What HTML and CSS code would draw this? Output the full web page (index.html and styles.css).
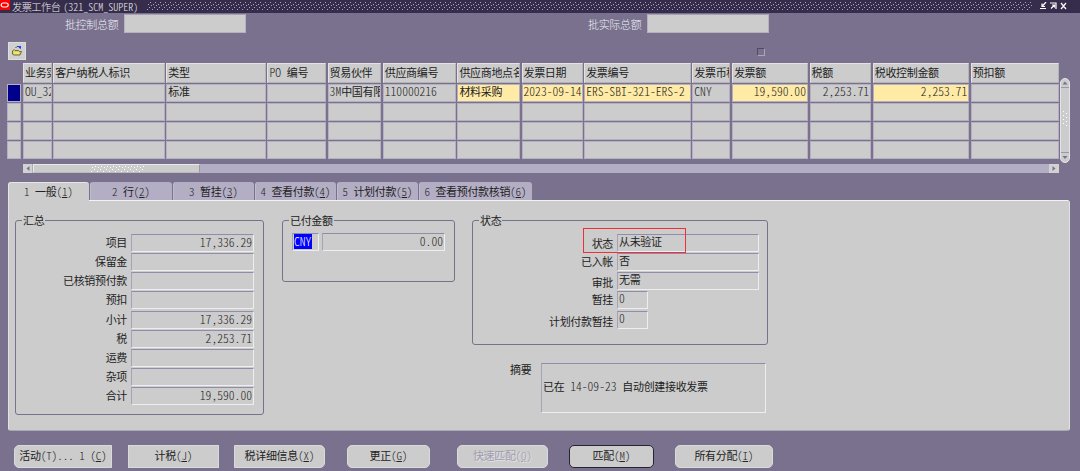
FILE: index.html
```
<!DOCTYPE html>
<html lang="zh-CN">
<head>
<meta charset="utf-8">
<title>发票工作台</title>
<link rel="stylesheet" href="styles.css">
</head>
<body>
<div class="window">
  <header class="titlebar">
    <svg class="oracle" width="10" height="10" viewBox="0 0 10 10"><path fill="#f00" d="M0 0H10V10H0z"/><rect x="1.2" y="3" width="7" height="4" rx="2" fill="none" stroke="#fff" stroke-width="1.2"/></svg>
    <span class="title">发票工作台 <i>(321_SCM_SUPER)</i></span>
    <svg class="grip" height="8"><defs><pattern id="dots" width="5" height="8" patternUnits="userSpaceOnUse"><path d="M3 0h1v1h-1zM1 2h1v1h-1zM4 3h1v1h-1zM2 5h1v1h-1zM0 7h1v1h-1z" fill="#aaa5b6"/></pattern></defs><rect width="100%" height="8" fill="url(#dots)"/></svg>
    <svg class="winbtns" width="28" height="8" viewBox="0 0 28 8" fill="none" stroke="#fff" stroke-width="1.2"><path d="M0 6.500H6M6 0L2.500 4M2 1.500V4.500H5M10 1H16V7M11 6.500L14.500 3M12 3H14.500V5.500M21 1L26 7M26 1L21 7"/></svg>
  </header>

  <section class="totals">
    <label>批控制总额</label><div class="totalbox first"></div>
    <label>批实际总额</label><div class="totalbox"></div>
  </section>

  <section class="tools">
    <div class="toolbtn"><svg width="12" height="12" viewBox="0 0 12 12"><path d="M1.500 6L3 4.500L4 5.500H7.500L8.500 6.500H10.500L9 10H2.500L1.500 9z" fill="#dcd458" stroke="#555325" stroke-width=".8"/><path d="M3 8H8" stroke="#fff8a0"/><path d="M4.500 3L6 1.500H8" fill="none" stroke="#444"/><path d="M7 1H10V4L8 3z" fill="#1845f8"/></svg></div>
    <div class="check"></div>
  </section>

  <section class="grid">
    <div class="cells">
      <b></b><b class="h">业务实体</b><b class="h">客户纳税人标识</b><b class="h">类型</b><b class="h"><i>PO </i>编号</b><b class="h">贸易伙伴</b><b class="h">供应商编号</b><b class="h">供应商地点名</b><b class="h">发票日期</b><b class="h">发票编号</b><b class="h">发票币种</b><b class="h">发票额</b><b class="h">税额</b><b class="h">税收控制金额</b><b class="h">预扣额</b>
      <div class="sel"></div><div><i>OU_321</i></div><div></div><div>标准</div><div></div><div><i>3M</i>中国有限</div><div><i>110000216</i></div><div class="y">材料采购</div><div class="y"><i>2023-09-14</i></div><div class="y"><i>ERS-SBI-321-ERS-2</i></div><div><i>CNY</i></div><div class="y r"><i>19,590.00</i></div><div class="r"><i>2,253.71</i></div><div class="y r"><i>2,253.71</i></div><div></div>
      <div></div><div></div><div></div><div></div><div></div><div></div><div></div><div></div><div></div><div></div><div></div><div></div><div></div><div></div><div></div>
      <div></div><div></div><div></div><div></div><div></div><div></div><div></div><div></div><div></div><div></div><div></div><div></div><div></div><div></div><div></div>
      <div></div><div></div><div></div><div></div><div></div><div></div><div></div><div></div><div></div><div></div><div></div><div></div><div></div><div></div><div></div>
    </div>
    <svg class="vscroll" width="10" height="85" viewBox="0 0 10 85"><rect x=".5" y=".5" width="9" height="84" rx="4.500" fill="#ccc" stroke="#e3e2e8"/><path d="M1 9.500H9M1 74.500H9" stroke="#9a96ac"/><path d="M2.500 6.500L5 3.500L7.500 6.500zM2.500 78L5 81L7.500 78z" fill="#77718c"/><path d="M3 33h1v1h-1zM6 35h1v1h-1zM3 37h1v1h-1zM6 39h1v1h-1zM3 41h1v1h-1zM6 43h1v1h-1zM3 45h1v1h-1zM6 47h1v1h-1z" fill="#fff"/></svg>
  </section>

  <div class="hscroll">
    <svg class="arrow" width="10" height="9" viewBox="0 0 10 9"><path d="M6.500 2L3.500 4.500L6.500 7z" fill="#77718c"/><path d="M9.500 0V9" stroke="#b0adba"/></svg>
    <div class="thumb"><svg width="54" height="6"><defs><pattern id="bumps" width="6" height="6" patternUnits="userSpaceOnUse"><path d="M4 0h1v1h-1zM1 1h1v1h-1zM3 3h1v1h-1zM0 5h1v1h-1z" fill="#fff"/></pattern></defs><rect width="54" height="6" fill="url(#bumps)"/></svg></div>
    <svg class="arrow end" width="10" height="9" viewBox="0 0 10 9"><path d="M3.500 2L6.500 4.500L3.500 7z" fill="#77718c"/></svg>
  </div>

  <nav class="tabs">
    <div class="active t1"><i>1 </i>一般<i>(<u>1</u>)</i></div><div class="t2"><i>2 </i>行<i>(<u>2</u>)</i></div><div class="t3"><i>3 </i>暂挂<i>(<u>3</u>)</i></div><div class="t4"><i>4 </i>查看付款<i>(<u>4</u>)</i></div><div class="t5"><i>5 </i>计划付款<i>(<u>5</u>)</i></div><div class="t6"><i>6 </i>查看预付款核销<i>(<u>6</u>)</i></div>
  </nav>

  <main class="panel">
    <section class="group summary">
      <h2>汇总</h2>
      <div class="row"><label>项目</label><div class="field r"><i>17,336.29</i></div></div>
      <div class="row"><label>保留金</label><div class="field"></div></div>
      <div class="row"><label>已核销预付款</label><div class="field"></div></div>
      <div class="row"><label>预扣</label><div class="field"></div></div>
      <div class="row"><label>小计</label><div class="field r"><i>17,336.29</i></div></div>
      <div class="row"><label>税</label><div class="field r"><i>2,253.71</i></div></div>
      <div class="row"><label>运费</label><div class="field"></div></div>
      <div class="row"><label>杂项</label><div class="field"></div></div>
      <div class="row"><label>合计</label><div class="field r"><i>19,590.00</i></div></div>
    </section>
    <section class="group paid">
      <h2>已付金额</h2>
      <div class="field currency"><i>CNY</i></div>
      <div class="field amount r"><i>0.00</i></div>
    </section>
    <div class="side">
      <section class="group status">
        <h2>状态</h2>
        <div class="row"><label>状态</label><div class="field">从未验证</div></div>
        <div class="row"><label>已入帐</label><div class="field">否</div></div>
        <div class="row low"><label>审批</label><div class="field">无需</div></div>
        <div class="row"><label>暂挂</label><div class="field small"><i>0</i></div></div>
        <div class="row low"><label>计划付款暂挂</label><div class="field small"><i>0</i></div></div>
        <div class="highlight"></div>
      </section>
      <section class="memo"><label>摘要</label><div class="field">已在<i> 14-09-23 </i>自动创建接收发票</div></section>
    </div>
  </main>

  <footer class="buttons">
    <button class="b1">活动<i>(T)... 1 (<u>C</u>)</i></button>
    <button class="b2">计税<i>(<u>J</u>)</i></button>
    <button class="b3">税详细信息<i>(<u>X</u>)</i></button>
    <button class="b4">更正<i>(<u>G</u>)</i></button>
    <button class="b5" disabled>快速匹配<i>(<u>Q</u>)</i></button>
    <button class="b6">匹配<i>(<u>M</u>)</i></button>
    <button class="b7">所有分配<i>(<u>I</u>)</i></button>
  </footer>
</div>
</body>
</html>
```
FILE: styles.css
```
* { box-sizing: border-box; }
body { margin: 0; }
svg { display: block; flex: none; }
i {
  font-style: normal;
  font-weight: 300;
  font-size: 11.6px;
  letter-spacing: 0;
  font-feature-settings: "hwid";
  white-space: pre;
  color: #222;
}
u { text-decoration: underline; text-underline-offset: 1px; text-decoration-thickness: 1px; }
.window {
  width: 1080px;
  height: 471px;
  overflow: hidden;
  display: flex;
  flex-direction: column;
  background: #79718e;
  color: #222;
  font: 400 11px/14px "Noto Sans CJK SC", sans-serif;
  letter-spacing: -0.33px;
  white-space: nowrap;
}

.titlebar { height: 13px; background: #352d4b; display: flex; color: #eee; }
.title { margin-left: 2px; font-size: 10.2px; font-weight: 300; letter-spacing: -0.5px; line-height: 13px; width: 135px; }
.title i { font-size: 10px; color: #eee; margin-left: 1px; }
.grip { width: 885px; margin-top: 2px; }
.winbtns { margin: 2px 0 0 8px; }

.totals { height: 29px; padding: 1px 0 0 65px; display: flex; color: #f0f0f4; }
.totals label { width: 59px; line-height: 20px; font-weight: 300; }
.totalbox { width: 122px; height: 19px; background: #ccc; border: 1px solid #b5b2c0; border-top-color: #a5a1b4; }
.totalbox.first { margin-right: 342px; }

.tools { height: 21px; display: flex; padding-left: 8px; }
.toolbtn { width: 18px; height: 18px; background: #d0d0d0; border: 1px solid #dededf; padding: 2px; }
.check { width: 8px; height: 8px; margin: 6px 0 0 731px; border: 1px solid #50466e; border-right-color: #aaa6b7; border-bottom-color: #aaa6b7; }

.grid { display: flex; height: 101px; padding-left: 7.4px; }
.cells {
  display: grid;
  grid-template-columns: 14px 28.500px 111.500px 99.500px 58.500px 53.500px 73px 62.500px 61px 106.500px 38px 76px 61.500px 96.500px 88px;
  grid-template-rows: 20px 18px 18px 18px 18px;
  column-gap: 1.65px;
  row-gap: 1px;
  width: 1052.6px;
}
.cells > * { overflow: hidden; padding: 0 1px; font-weight: 400; }
.cells > div { background: #ccc; border: 1px solid #b4b0c2; line-height: 12px; }
.cells > .h { background: #ccc; border: 1px solid #e3e3e3; border-right-color: #b4b3b6; border-bottom-color: #b4b3b6; line-height: 16px; }
.cells > .sel { background: #00008b; }
.cells > .y { background: #ffeba5; }
.cells > .r { text-align: right; }
.vscroll { margin-top: 15px; }

.hscroll { width: 1036px; height: 9px; margin-left: 23px; background: #b4aec4; display: flex; }
.arrow { background: #d2d2d2; }
.arrow.end { margin-left: auto; }
.thumb { width: 167px; background: #ccc; border: 1px solid #e8e8e8; border-right-color: #999; border-bottom-color: #bbb; padding: 1px 0 0 57px; }

.tabs { display: flex; height: 18px; margin: 9px 0 0 8px; gap: 1px; }
.tabs div { height: 18px; background: #b4aec4; border-radius: 3px 3px 0 0; line-height: 19px; border-left: 1px solid #c0bbcd; text-align: center; padding-right: 1px; }
.tabs i, .buttons i { font-size: 11px; }
.tabs .active { position: relative; z-index: 1; background: #ccc; height: 19px; line-height: 17px; border-color: #e6e6e6; border-top: 1px solid #e6e6e6; }
.t1 { width: 81px; } .t2 { width: 82px; } .t3 { width: 81px; } .t4 { width: 81px; } .t5 { width: 81px; } .t6 { width: 113px; }

.panel { width: 1062px; height: 231px; margin-left: 8px; flex: none; padding: 19px 0 0 7px; background: #ccc; border: 1px solid #e2e2e2; border-top-color: #f2f2f2; border-bottom-color: #aaa8b2; border-radius: 0 3px 3px 3px; display: flex; align-items: flex-start; }
.group { position: relative; border: 1px solid #77728b; border-radius: 3px; flex: none; }
.group h2 { position: absolute; left: 6px; top: -7px; margin: 0; padding: 0 1px; background: #ccc; font-size: inherit; font-weight: 400; line-height: 13px; }
.field { height: 18px; background: #ccc; border: 1px solid #eee; border-left-color: #a6a2b8; border-top-color: #918cac; padding-left: 1px; line-height: 14px; }
.field.r { text-align: right; padding-right: 1px; }
.row { display: flex; height: 19.15px; }
.row label { text-align: right; line-height: 17px; }
.summary { width: 249px; height: 195px; padding: 13px 0 0; margin-left: -1px; }
.summary label { width: 111px; margin-right: 4px; }
.summary .field { width: 123px; }
.paid { width: 173px; height: 62px; margin-left: 18px; padding: 12px 0 0 9px; display: flex; gap: 3px; }
.currency { width: 27px; }
.currency i { display: block; width: 18px; height: 15px; line-height: 14px; background: #00f; color: #fff; }
.amount { width: 123px; }
.side { margin-left: 17px; width: 296px; }
.status { width: 296px; height: 125px; padding: 13px 0 0; }
.status label { width: 140px; margin-right: 4px; }
.status .row:first-of-type label { line-height: 19px; }
.status .low label { line-height: 21px; }
.status .field { width: 142px; line-height: 13px; }
.status .small { width: 31px; }
.highlight { position: absolute; left: 110px; top: 7px; width: 103px; height: 25px; border: 1.5px solid #ed3036; }
.memo { display: flex; margin: 18px 0 0 38px; }
.memo label { width: 31px; line-height: 12px; }
.memo .field { width: 225px; height: 50px; line-height: 45px; }

.buttons { display: flex; padding: 14px 0 0 14px; }
button { height: 23px; border: 1px solid #dadadd; border-radius: 5px; background: #ccc; padding: 0 0 3px; color: #222; font: inherit; letter-spacing: inherit; line-height: 16px; text-align: center; }
.b1 { width: 98px; border-radius: 5px 0 0 5px; }
.b2 { width: 91px; margin-left: 16px; border-radius: 0; }
.b3 { width: 91px; margin-left: 15px; border-radius: 0 5px 5px 0; }
.b4 { width: 83px; margin-left: 22px; }
.b5 { width: 91px; margin-left: 27px; }
.b6 { width: 85px; margin-left: 21px; border: 1px solid #262333; }
.b7 { width: 98px; margin-left: 21px; }
.b5, .b5 i { color: #a29caf; text-shadow: 1px 1px #e2e2e4; }
```
